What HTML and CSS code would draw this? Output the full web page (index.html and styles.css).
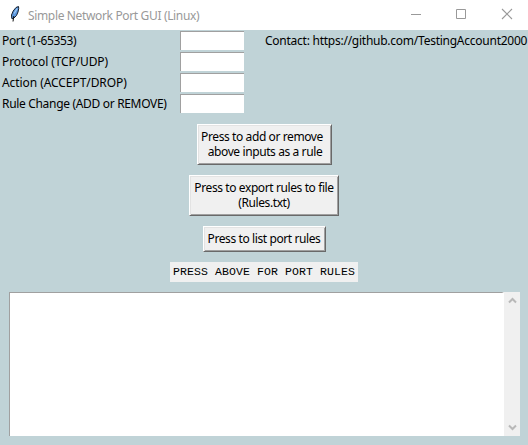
FILE: index.html
```
<!DOCTYPE html>
<html lang="en">
<head>
<meta charset="utf-8">
<title>Simple Network Port GUI (Linux)</title>
<link rel="stylesheet" href="styles.css">
</head>
<body>
<header class="titlebar">
  <svg class="feather" width="12" height="18" viewBox="0 0 12 18">
    <path d="M9.500 1.500 7 2.500 4.200 6 2.500 10l.3 3.500 1.500.2L7.500 10.500 9 7l.7-3.500Z" fill="#5b96dc" stroke="#15202e" stroke-width="1"/>
    <path d="M8.200 3.500 5.200 8.500" stroke="#9fcaf5" stroke-width="1.200"/>
    <path d="M4.800 11 4 16.500" fill="none" stroke="#111"/>
  </svg>
  <h1 class="title">Simple Network Port GUI (Linux)</h1>
  <svg class="controls" width="110" height="12" viewBox="0 0 110 12" fill="none" stroke="#999">
    <path d="M0 6.5h10M45.500 1.500h9v9h-9z"/>
    <path d="m91 1 10 10m0-10L91 11" stroke-width="1.1"/>
  </svg>
</header>
<main class="window">
  <section class="form">
    <label class="port" for="port">Port (1-65353)</label><input id="port">
    <span class="contact">Contact: https://github.com/TestingAccount2000</span>
    <label class="protocol" for="protocol">Protocol (TCP/UDP)</label><input id="protocol">
    <label class="action" for="action">Action (ACCEPT/DROP)</label><input id="action">
    <label class="change" for="change">Rule Change (ADD or REMOVE)</label><input id="change">
  </section>
  <section class="actions">
    <button class="add"><span>Press to add or remove</span><span class="second">above inputs as a rule</span></button>
    <button class="export"><span>Press to export rules to file</span><span>(Rules.txt)</span></button>
    <button class="list"><span>Press to list port rules</span></button>
    <p class="status">PRESS ABOVE FOR PORT RULES</p>
  </section>
  <section class="output">
    <div class="text"></div>
    <div class="scrollbar">
      <svg width="9" height="7" viewBox="0 0 9 7"><path d="m1 5.500 3.500-3.500L8 5.500" fill="none" stroke="#b8b8b8" stroke-width="2"/></svg>
      <svg width="9" height="7" viewBox="0 0 9 7"><path d="m1 1.500 3.500 3.500L8 1.500" fill="none" stroke="#b8b8b8" stroke-width="2"/></svg>
    </div>
  </section>
</main>
</body>
</html>
```
FILE: styles.css
```
* { box-sizing: border-box; }
body {
  margin: 0;
  width: 528px;
  height: 445px;
  overflow: hidden;
  background: #c0d3d7;
  color: #000;
  font: 12px/15px "Noto Sans", "Open Sans", sans-serif;
  letter-spacing: -0.35px;
  white-space: nowrap;
}
.titlebar {
  display: flex;
  align-items: center;
  height: 30px;
  padding: 0 16px 2px 9px;
  background: #fff;
}
.feather { margin-right: 7px; }
.title { margin: 2px 0 0; font-size: 12px; font-weight: 400; color: #999; }
.controls { margin-left: auto; margin-right: -9px; }
.form {
  display: grid;
  grid-template-columns: 178px 64px 1fr;
  grid-auto-rows: 21px;
  align-items: center;
  padding-left: 2px;
}
.form label { grid-column: 1; }
.form .protocol { letter-spacing: -0.1px; }
.form .action { letter-spacing: -0.07px; }
.form .change { letter-spacing: -0.32px; }
.form input {
  grid-column: 2;
  width: 64px;
  height: 19px;
  padding: 0;
  border: solid #a0a0a0;
  border-width: 1px 0 0 1px;
  border-radius: 0;
  background: #fff;
}
.contact { padding-left: 21px; letter-spacing: -0.25px; }
.actions { display: flex; flex-direction: column; align-items: center; padding-top: 10px; }
button {
  display: flex;
  flex-direction: column;
  align-items: center;
  justify-content: center;
  margin: 0 0 10px;
  padding: 0 0 1px;
  border: 1px solid;
  border-color: #fff #696969 #696969 #fff;
  border-radius: 0;
  box-shadow: inset 1px 1px #e3e3e3, inset -1px -1px #a0a0a0;
  background: #f0f0f0;
  color: #000;
  font: inherit;
  letter-spacing: -0.4px;
}
.add { width: 135px; height: 41px; }
.add span { margin-right: 4px; }
.add .second { margin: 0 0 0 2px; }
.export { width: 150px; height: 41px; }
.list { width: 123px; height: 26px; }
.status {
  width: 188px;
  height: 20px;
  margin: 0;
  background: #f0f0f0;
  font: 11.5px/20px "Liberation Mono", monospace;
  letter-spacing: 0.1px;
  text-align: center;
}
.output { display: flex; width: 511px; height: 144px; margin: 10px 0 0 9px; }
.text { flex: 1; border: solid #a0a0a0; border-width: 1px 0 0 1px; border-right: 2px solid #fff; background: #fff; }
.scrollbar {
  display: flex;
  flex-direction: column;
  justify-content: space-between;
  align-items: center;
  width: 16px;
  padding: 5px 0;
  background: #f0f0f0;
}
```
